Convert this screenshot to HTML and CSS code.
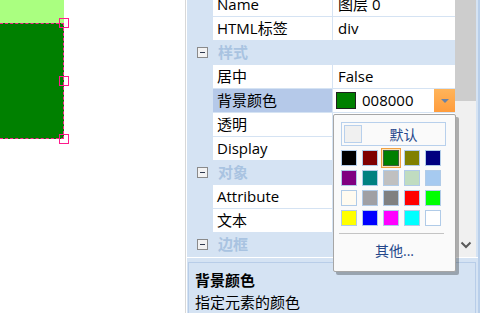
FILE: index.html
```html
<!DOCTYPE html>
<html lang="zh-CN">
<head>
    <meta charset="utf-8">
    <title>属性面板</title>
    <link rel="stylesheet" href="styles.css">
</head>
<body>
    <div class="canvas">
        <div class="layer-top"></div>
        <div class="layer-box"></div>
        <span class="handle h-top"></span>
        <span class="handle h-mid"></span>
        <span class="handle h-bottom"></span>
    </div>
    <div class="split"></div>
    <div class="panel">
        <div class="grid-area">
            <div class="rows">
                <div class="row"><div class="gutter"></div><div class="name">Name</div><div class="value">图层 0</div></div>
                <div class="row"><div class="gutter"></div><div class="name">HTML标签</div><div class="value">div</div></div>
                <div class="row cat"><div class="gutter"><span class="toggle"></span></div><div class="cat-name">样式</div></div>
                <div class="row"><div class="gutter"></div><div class="name">居中</div><div class="value">False</div></div>
                <div class="row selected"><div class="gutter"></div><div class="name">背景颜色</div>
                    <div class="value color-value"><span class="swatch"></span><span class="hex">008000</span><span class="drop"></span></div>
                </div>
                <div class="row"><div class="gutter"></div><div class="name">透明</div><div class="value"></div></div>
                <div class="row"><div class="gutter"></div><div class="name">Display</div><div class="value"></div></div>
                <div class="row cat"><div class="gutter"><span class="toggle"></span></div><div class="cat-name">对象</div></div>
                <div class="row"><div class="gutter"></div><div class="name">Attribute</div><div class="value"></div></div>
                <div class="row"><div class="gutter"></div><div class="name">文本</div><div class="value"></div></div>
                <div class="row cat"><div class="gutter"><span class="toggle"></span></div><div class="cat-name">边框</div></div>
            </div>
            <div class="scrollbar">
                <div class="thumb"></div>
                <div class="track"></div>
                <div class="arrow">
                    <svg width="12" height="8" viewBox="0 0 12 8"><path d="M1.5 1.5 L6 6 L10.5 1.5" fill="none" stroke="#5a5a5a" stroke-width="2"/></svg>
                </div>
            </div>
        </div>
        <div class="desc">
            <div class="desc-title">背景颜色</div>
            <div class="desc-text">指定元素的颜色</div>
        </div>
    </div>

    <div class="picker">
        <div class="default-btn"><span class="default-swatch"></span><span class="default-label">默认</span></div>
        <div class="palette">
            <span class="cell" style="background:#000000"></span>
            <span class="cell" style="background:#800000"></span>
            <span class="cell current" style="background:#008000"></span>
            <span class="cell" style="background:#808000"></span>
            <span class="cell" style="background:#000080"></span>
            <span class="cell" style="background:#800080"></span>
            <span class="cell" style="background:#008080"></span>
            <span class="cell" style="background:#c0c0c0"></span>
            <span class="cell" style="background:#c0dcc0"></span>
            <span class="cell" style="background:#a6caf0"></span>
            <span class="cell" style="background:#fffbf0"></span>
            <span class="cell" style="background:#a0a0a4"></span>
            <span class="cell" style="background:#808080"></span>
            <span class="cell" style="background:#ff0000"></span>
            <span class="cell" style="background:#00ff00"></span>
            <span class="cell" style="background:#ffff00"></span>
            <span class="cell" style="background:#0000ff"></span>
            <span class="cell" style="background:#ff00ff"></span>
            <span class="cell" style="background:#00ffff"></span>
            <span class="cell" style="background:#ffffff"></span>
        </div>
        <div class="picker-sep"></div>
        <div class="more">其他...</div>
    </div>
</body>
</html>
```

FILE: styles.css
```css
body{
    margin: 0;
    width: 487px;
    height: 313px;
    display: flex;
    overflow: hidden;
    background-color: #ffffff;
    font-family: "Open Sans", "Noto Sans CJK SC", sans-serif;
    font-size: 15px;
    color: #000000;
}
.canvas{
    position: relative;
    width: 185px;
    flex: none;
    background-color: #ffffff;
}
.layer-top{
    width: 64px;
    height: 23px;
    background-color: #aaff80;
}
.layer-box{
    width: 63px;
    height: 114px;
    background-color: #008000;
    border-top: 1px dashed #ff2090;
    border-right: 1px dashed #ff2090;
    border-bottom: 1px dashed #ff2090;
}
.handle{
    position: absolute;
    left: 59px;
    width: 8px;
    height: 8px;
    border: 1px solid #ff1a8c;
}
.h-top{ top: 18px; }
.h-mid{ top: 76px; }
.h-bottom{ top: 134px; }
.split{
    width: 2px;
    flex: none;
    background-color: #d8d8d8;
    border-right: 1px solid #ffffff;
    box-sizing: border-box;
}
.panel{
    width: 293px;
    flex: none;
    display: flex;
    flex-direction: column;
    background-color: #d5e3f3;
    border-right: 2px solid #b9cfea;
    box-sizing: border-box;
}
.grid-area{
    height: 257px;
    display: flex;
    overflow: hidden;
    border-bottom: 1px solid #ffffff;
}
.rows{
    width: 268px;
    margin-top: -7px;
}
.row{
    display: flex;
    height: 23px;
    margin-bottom: 1px;
    line-height: 23px;
}
.gutter{
    width: 26px;
    flex: none;
    display: flex;
    align-items: center;
}
.name{
    width: 115px;
    padding-left: 4px;
    background-color: #ffffff;
    white-space: nowrap;
}
.value{
    width: 117px;
    margin-left: 1px;
    padding-left: 5px;
    background-color: #ffffff;
    white-space: nowrap;
}
.selected .name{
    background-color: #b5c9e9;
}
.cat-name{
    padding-left: 5px;
    font-weight: bold;
    color: #a9c3e1;
}
.toggle{
    position: relative;
    margin-left: 10px;
    width: 9px;
    height: 9px;
    border: 1px solid #8a8a8a;
    background-color: #f2f2f2;
}
.toggle::after{
    content: "";
    position: absolute;
    left: 2px;
    top: 4px;
    width: 5px;
    height: 1px;
    background-color: #303a50;
}
.color-value{
    display: flex;
    align-items: center;
    padding-left: 3px;
    width: 119px;
}
.swatch{
    width: 18px;
    height: 15px;
    background-color: #008000;
    border: 1px solid #202020;
}
.hex{
    margin-left: 6px;
    flex: 1;
}
.drop{
    position: relative;
    width: 21px;
    height: 23px;
    background: linear-gradient(#ffb45a, #ff9c3c);
}
.drop::after{
    content: "";
    position: absolute;
    left: 7px;
    top: 10px;
    border-left: 4px solid transparent;
    border-right: 4px solid transparent;
    border-top: 4px solid #6a82a6;
}
.scrollbar{
    width: 21px;
    display: flex;
    flex-direction: column;
    background-color: #f0f0f0;
}
.thumb{
    height: 101px;
    background-color: #cdcdcd;
}
.track{
    flex: 1;
}
.arrow{
    height: 24px;
    display: flex;
    align-items: center;
    justify-content: center;
}
.desc{
    margin: 4px 2px 0 1px;
    flex: 1;
    padding: 6px 6px 0;
    border-top: 1px solid #b8cde8;
    border-left: 1px solid #b8cde8;
    border-right: 1px solid #b8cde8;
    line-height: 22px;
}
.desc-title{
    font-weight: bold;
}
.picker{
    position: absolute;
    left: 333px;
    top: 114px;
    width: 114px;
    height: 149px;
    padding: 7px 0 0 7px;
    box-sizing: content-box;
    background-color: #fafafa;
    border: 1px solid #a6a6a6;
    border-radius: 2px;
    box-shadow: 3px 3px 0 rgba(0, 0, 0, 0.28);
}
.default-btn{
    display: flex;
    align-items: center;
    width: 101px;
    height: 22px;
    border: 1px solid #b8d0ec;
    padding-left: 2px;
    box-sizing: content-box;
}
.default-swatch{
    width: 16px;
    height: 16px;
    background-color: #f0f0f0;
    border: 1px solid #b8d0ec;
}
.default-label{
    flex: 1;
    text-align: center;
    color: #25478a;
    font-size: 14px;
}
.palette{
    margin-top: 4px;
    display: grid;
    grid-template-columns: repeat(5, 16px);
    grid-auto-rows: 16px;
    column-gap: 5px;
    row-gap: 4px;
}
.cell{
    box-sizing: border-box;
    border: 1px solid #b0cbe8;
}
.cell.current{
    border-color: #3d5d3d;
    box-shadow: 0 0 0 1px #fbe3b8, 0 0 0 2px #f0a040;
}
.picker-sep{
    margin: 7px 0 0 -2px;
    width: 105px;
    height: 1px;
    background-color: #c4c4c4;
}
.more{
    margin-left: -7px;
    margin-top: 6px;
    text-align: center;
    color: #25478a;
    font-size: 14px;
}
```
